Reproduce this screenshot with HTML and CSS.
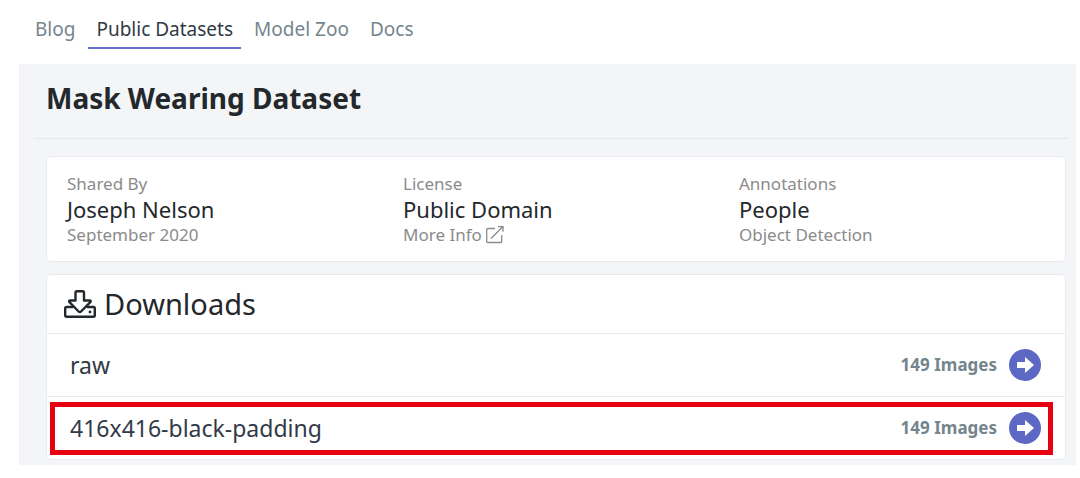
FILE: index.html
```
<!DOCTYPE html>
<html lang="en">
<head>
    <meta charset="UTF-8">
    <meta name="viewport" content="width=device-width, initial-scale=1.0">
    <title>Mask Wearing Dataset</title>
    <link rel="stylesheet" href="styles.css">
</head>
<body>
    <nav class="nav">
        <a href="#">Blog</a>
        <a href="#" class="active">Public Datasets</a>
        <a href="#">Model Zoo</a>
        <a href="#">Docs</a>
    </nav>
    <main class="page">
        <h1 class="title">Mask Wearing Dataset</h1>
        <section class="card info">
            <div class="info_col">
                <p class="label">Shared By</p>
                <p class="value">Joseph Nelson</p>
                <p class="label">September 2020</p>
            </div>
            <div class="info_col">
                <p class="label">License</p>
                <p class="value">Public Domain</p>
                <p class="label">
                    <a href="#">More Info
                        <svg class="icon_ext" viewBox="0 0 18 18" fill="none" stroke="currentColor" stroke-width="1.300" aria-hidden="true">
                            <path d="M9 2.500H1.700a1 1 0 0 0-1 1v12a1 1 0 0 0 1 1h13a1 1 0 0 0 1-1V9M5 12.500L16.500 1M12 .7h5v5"/>
                        </svg>
                    </a>
                </p>
            </div>
            <div class="info_col">
                <p class="label">Annotations</p>
                <p class="value">People</p>
                <p class="label">Object Detection</p>
            </div>
        </section>
        <section class="card">
            <h2 class="downloads">
                <svg class="icon_dl" viewBox="0 0 32 28" fill="none" stroke="currentColor" stroke-width="2.400" stroke-linejoin="round" stroke-linecap="round" aria-hidden="true">
                    <path d="M8.500 17H2.700Q1.200 17 1.200 18.500V25.300Q1.200 26.800 2.700 26.800H29.300Q30.800 26.800 30.800 25.300V18.500Q30.800 17 29.300 17H23.500"/>
                    <path d="M11.500 2.700Q11.500 1.200 13 1.200H18.500Q20 1.200 20 2.700V10.500H25.500Q27.500 10.500 26.300 12.200L17 21.500Q15.800 22.700 14.600 21.500L5.500 12.200Q4.300 10.500 6.300 10.500H11.500Z"/>
                    <circle cx="26" cy="22" r="1.400" fill="currentColor" stroke="none"/>
                </svg>
                Downloads
            </h2>
            <a href="#" class="row">
                <span class="name">raw</span>
                <span class="count">149 Images</span>
                <svg class="icon_go" viewBox="0 0 32 32" aria-hidden="true">
                    <circle cx="16" cy="16" r="16" fill="#5c68c3"/>
                    <path d="M8 13h8V8l9 8-9 8v-5H8z" fill="#fff"/>
                </svg>
            </a>
            <a href="#" class="row marked">
                <span class="name">416x416-black-padding</span>
                <span class="count">149 Images</span>
                <svg class="icon_go" viewBox="0 0 32 32" aria-hidden="true">
                    <circle cx="16" cy="16" r="16" fill="#5c68c3"/>
                    <path d="M8 13h8V8l9 8-9 8v-5H8z" fill="#fff"/>
                </svg>
            </a>
        </section>
    </main>
</body>
</html>
```

FILE: styles.css
```
* {margin: 0; padding: 0; box-sizing: border-box;}

body
{
    font-family: "Noto Sans", "Open Sans", sans-serif;
    color: #23282c;
    background: #fff;
}

a
{
    color: inherit;
    text-decoration: none;
}

.nav
{
    display: flex;
    gap: 5px;
    padding: 11px 27px 15px;
    font-size: 19px;
    line-height: 36px;
    color: #75858d;
}

.nav a
{
    padding: 0 8px;
    border-bottom: 2px solid transparent;
}

.nav .active
{
    color: #323a46;
    border-color: #6672cf;
}

.page
{
    margin: 0 4px 0 19px;
    padding: 0 8px 5px 15px;
    background: #f4f5f7;
}

.title
{
    padding: 14px 12px 20px;
    border-bottom: 1px solid #e5e7ea;
    font-size: 28px;
    line-height: 40px;
}

.card
{
    margin: 12px 2px 0 12px;
    background: #fff;
    border: 1px solid #e8eaef;
    border-radius: 4px;
}

.title + .card
{
    margin-top: 17px;
}

.info
{
    display: grid;
    grid-template-columns: repeat(3, 1fr);
    padding: 15px 0 14px 10px;
}

.info_col
{
    padding: 0 10px;
}

.label
{
    font-size: 17px;
    line-height: 24px;
    color: #8b8b8b;
}

.value
{
    font-size: 22px;
    line-height: 27px;
}

.icon_ext
{
    width: 18px;
    height: 18px;
    vertical-align: -3px;
}

.downloads
{
    display: flex;
    align-items: center;
    gap: 8px;
    padding: 8px 17px;
    font-size: 29px;
    font-weight: 400;
    line-height: 42px;
}

.icon_dl
{
    width: 32px;
    height: 28px;
}

.row
{
    position: relative;
    display: flex;
    align-items: center;
    padding: 15px 24px 15px 23px;
    border-top: 1px solid #e8eaef;
    line-height: 32px;
}

.name
{
    flex: 1;
    font-size: 23px;
    color: #323a46;
}

.count
{
    margin-right: 12px;
    font-size: 17px;
    font-weight: 700;
    color: #75858d;
}

.icon_go
{
    width: 32px;
    height: 32px;
}

/* red frame over the selected version */
.marked::after
{
    content: "";
    position: absolute;
    inset: 5px 12px 4px 3px;
    border: 5px solid #e60012;
}
```
